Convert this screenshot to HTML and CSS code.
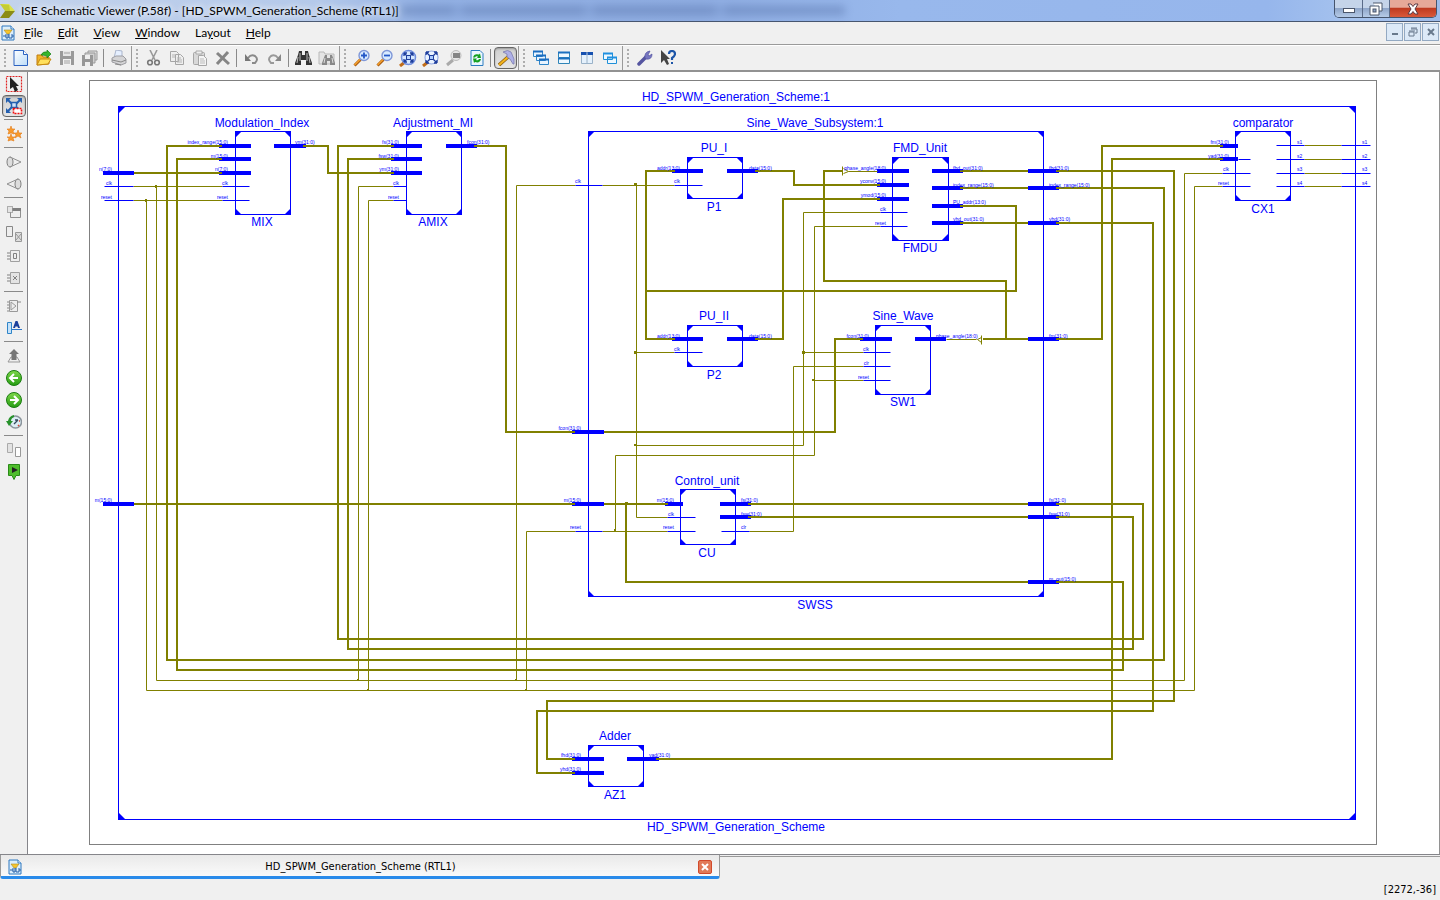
FILE: index.html
```html
<!DOCTYPE html>
<html lang="en">
<head>
<meta charset="utf-8">
<title>ISE Schematic Viewer</title>
<link rel="stylesheet" href="styles.css">
</head>
<body>
<svg class="defs" aria-hidden="true">
  <defs>
    <linearGradient id="g-green" x1="0" y1="0" x2="0" y2="1"><stop offset="0" stop-color="#7fd84a"/><stop offset="1" stop-color="#249c12"/></linearGradient>
    <linearGradient id="g-page" x1="0" y1="0" x2="1" y2="1"><stop offset="0" stop-color="#fff"/><stop offset="1" stop-color="#bcdcf8"/></linearGradient>
    <symbol id="doc" viewBox="0 0 16 16"><path d="M2 1h9l3 3v11H2z" fill="#dceefb" stroke="#2f78c0"/><path d="M11 1v3h3" fill="#fff" stroke="#2f78c0"/><path d="M4 5h8l-3 4H7z" fill="#f7c52d" stroke="#a98a2a" stroke-width=".6"/><path d="M3 11h3M6 9v4h2v-4M9 9v4h3v-4M12 11h2" fill="none" stroke="#245ea8"/></symbol>
    <symbol id="lens" viewBox="0 0 18 18"><path d="M1.500 16.500l6-6" stroke="#a85b10" stroke-width="3"/><path d="M1.500 16l6-6" stroke="#f5a12c" stroke-width="1.500"/><circle cx="11" cy="6.500" r="5" fill="#d9ebff" stroke="#7f97d8" stroke-width="1.400"/></symbol>
  </defs>
</svg>
<div class="app">
  <header class="titlebar">
    <svg class="logo" width="16" height="16" viewBox="0 0 16 16" aria-hidden="true"><path d="M0 1h9l6 7h-5z" fill="#dce34c"/><path d="M0 1l9 1 1 6H5z" fill="#c4cc35"/><path d="M5 8h10l-6 7H0z" fill="#8b8c16"/></svg>
    <h1 class="title">ISE Schematic Viewer (P.58f) - [HD_SPWM_Generation_Scheme (RTL1)]</h1>
    <span class="haze" aria-hidden="true"></span>
    <div class="wincontrols">
      <button class="wc wc-min" aria-label="Minimize"><svg width="14" height="12" viewBox="0 0 14 12"><rect x="1.500" y="5.500" width="11" height="4" fill="#fff" stroke="#4b566b"/></svg></button>
      <button class="wc wc-max" aria-label="Restore"><svg width="14" height="14" viewBox="0 0 14 14"><path d="M4 1h9v8h-3M1 4h9v9H1z" fill="#fff" stroke="#4b566b"/><rect x="4" y="7" width="3" height="3" fill="#8fa5c6" stroke="#4b566b"/></svg></button>
      <button class="wc wc-close" aria-label="Close"><svg width="14" height="12" viewBox="0 0 14 12"><path d="M2 1h3l2 2.500L9 1h3L9 6l3 5H9L7 8.500 5 11H2l3-5z" fill="#fff" stroke="#5a3a44"/></svg></button>
    </div>
  </header>

  <nav class="menubar">
    <svg class="docicon" width="16" height="16"><use href="#doc"/></svg>
    <button class="menu"><u>F</u>ile</button>
    <button class="menu"><u>E</u>dit</button>
    <button class="menu"><u>V</u>iew</button>
    <button class="menu"><u>W</u>indow</button>
    <button class="menu">La<u>y</u>out</button>
    <button class="menu"><u>H</u>elp</button>
    <div class="mdi">
      <button class="mdib" aria-label="Minimize document"><svg width="10" height="10"><rect x="2" y="6" width="6" height="2" fill="#68798c"/></svg></button>
      <button class="mdib" aria-label="Restore document"><svg width="10" height="10"><path d="M3 2h6v4H7M1 5h5v4H1zM3 1h6M1 4h6" fill="none" stroke="#68798c"/></svg></button>
      <button class="mdib" aria-label="Close document"><svg width="10" height="10"><path d="M2 2l6 6M8 2l-6 6" stroke="#68798c" stroke-width="2"/></svg></button>
    </div>
  </nav>

  <div class="toolbar">
    <div class="group">
      <button class="tb" aria-label="New"><svg width="16" height="16"><path d="M1 .500h9.500L14.500 4.500V15.500H1z" fill="url(#g-page)" stroke="#2c62c0"/><path d="M10.500 .500v4h4" fill="#fff" stroke="#2c62c0"/></svg></button>
      <button class="tb" aria-label="Open"><svg width="16" height="16"><path d="M1 5h5l1 2h6v7L1 15z" fill="#f0b428" stroke="#c07c10"/><path d="M1 15l3-6h11l-3 5z" fill="#ffe05c" stroke="#c58a12"/><path d="M5 5q2-4 6-3V0l4 4-4 4V6q-3-1-6-1z" fill="#37b52c" stroke="#188018" stroke-width=".7"/></svg></button>
      <button class="tb" aria-label="Save"><svg width="16" height="16"><path d="M1 1h14v14H1z" fill="#9a9a9a"/><path d="M4 1h8v5H4z" fill="#e6e6e6"/><path d="M4 9h8v6H4z" fill="#f2f2f2"/><path d="M5 3h6M5 11h6M5 13h6" stroke="#a0a0a0"/></svg></button>
      <button class="tb" aria-label="Save all"><svg width="16" height="16"><path d="M6 1h9v9H6z" fill="#ddd" stroke="#999"/><path d="M3 3h10v10H3z" fill="#d0d0d0" stroke="#999"/><path d="M0 5h11v11H0z" fill="#979797"/><path d="M3 5h5v4H3zM3 12h5v4H3z" fill="#eee"/></svg></button>
      <span class="sep"></span>
      <button class="tb" aria-label="Print"><svg width="16" height="16"><path d="M5 0l6 1v7H3z" fill="#e5efff" stroke="#aab5cc"/><path d="M1 8l4-2h7l3 3v4l-5 2-9-3z" fill="#d4d4d6" stroke="#9d9da2"/><path d="M1 10l9 2 5-2M4 14l6 1" fill="none" stroke="#888"/></svg></button>
    </div>
    <div class="group">
      <button class="tb" aria-label="Cut"><svg width="16" height="16"><path d="M4 0l5 10M11 0L6 10" stroke="#999" stroke-width="1.600"/><circle cx="4" cy="12.500" r="2.300" fill="none" stroke="#777" stroke-width="1.600"/><circle cx="11" cy="12.500" r="2.300" fill="none" stroke="#777" stroke-width="1.600"/></svg></button>
      <button class="tb" aria-label="Copy"><svg width="16" height="16"><path d="M1.500 1.500h6l2 2v8h-8zM6.500 4.500h5l3 3v7h-8z" fill="#eee" stroke="#a6a6a6"/><path d="M3 5h3M3 7h3M8 8h4M8 10h5M8 12h5" stroke="#b5b5b5"/></svg></button>
      <button class="tb" aria-label="Paste"><svg width="16" height="16"><rect x="1.500" y="2.500" width="11" height="12" rx="1" fill="#d8d8d8" stroke="#a6a6a6"/><path d="M4 1h6v3H4z" fill="#eee" stroke="#aaa"/><path d="M6.500 5.500h5l3 3v7h-8z" fill="#f4f4f4" stroke="#a6a6a6"/><path d="M8 9h4M8 11h5M8 13h5" stroke="#bbb"/></svg></button>
      <button class="tb" aria-label="Delete"><svg width="16" height="16"><path d="M2 3l12 11M13 2L2 14" stroke="#858585" stroke-width="3"/></svg></button>
      <span class="sep"></span>
      <button class="tb" aria-label="Undo"><svg width="16" height="16"><path d="M4 8q3-4 7-2 4 3 0 7H8" fill="none" stroke="#8a8a8a" stroke-width="2"/><path d="M1 4v7h6z" fill="#777"/></svg></button>
      <button class="tb" aria-label="Redo"><svg width="16" height="16"><path d="M11 8q-3-4-7-2-4 3 0 7h3" fill="none" stroke="#999" stroke-width="2"/><path d="M14 4v7H8z" fill="#888"/></svg></button>
      <span class="sep"></span>
      <button class="tb" aria-label="Find"><svg width="18" height="16"><path d="M4 1h3v4h3V1h3l1 4 3 8v2h-6v-5H6v5H0v-2l3-8z" fill="#333"/><path d="M3 7l-1 6M14 7l1 6M5 3v8M12 3v8" stroke="#bbb" stroke-width="1"/></svg></button>
      <button class="tb" aria-label="Find in files"><svg width="18" height="16"><path d="M1 2h5l1 2h9v10H1z" fill="#e4e4e4" stroke="#b8b8b8"/><path d="M7 5h2v3h3V5h2l3 8v2h-5v-4H9v4H4v-2z" fill="#888"/><path d="M7 8l-1 5M14 8l1 5" stroke="#ddd"/></svg></button>
    </div>
    <div class="group">
      <button class="tb" aria-label="Zoom in"><svg width="18" height="18"><use href="#lens"/><path d="M8 6.500h6M11 3.500v6" stroke="#2458c8" stroke-width="1.800"/></svg></button>
      <button class="tb" aria-label="Zoom out"><svg width="18" height="18"><use href="#lens"/><path d="M8 6.500h6" stroke="#2458c8" stroke-width="1.800"/></svg></button>
      <button class="tb" aria-label="Zoom to full view"><svg width="18" height="18"><path d="M1 17l5-4" stroke="#c06c18" stroke-width="3"/><circle cx="9.500" cy="8.500" r="7" fill="#d8e9ff" stroke="#6f8ddc" stroke-width="1.500"/><path d="M5 4l3 3M14 4l-3 3M5 13l3-3M14 13l-3-3M5 4h3M5 4v3M14 4h-3M14 4v3M5 13h3M5 13v-3M14 13h-3M14 13v-3" stroke="#1c3c9c" stroke-width="1.300"/><path d="M7.500 6.500h4v4h-4z" fill="#b9d5ff" stroke="#1c3c9c"/></svg></button>
      <button class="tb" aria-label="Zoom to selected"><svg width="18" height="18"><path d="M1 17l5-4" stroke="#c06c18" stroke-width="3"/><circle cx="9.500" cy="8.500" r="6.500" fill="#eaf3ff" stroke="#93aae4" stroke-width="1.200"/><path d="M4 3l4 4M15 3l-4 4M4 14l4-4M15 14l-4-4M4 3h3M4 3v3M15 3h-3M15 3v3M4 14h3M4 14v-3M15 14h-3M15 14v-3" stroke="#1c3c9c" stroke-width="1.300"/><path d="M7.500 6.500h4v4h-4z" fill="#a9caff" stroke="#1c3c9c"/></svg></button>
      <button class="tb" aria-label="Zoom to box"><svg width="18" height="18"><path d="M2 16l6-5" stroke="#aaa" stroke-width="3"/><circle cx="11" cy="6.500" r="5" fill="#e6e6e6" stroke="#bbb"/><path d="M8 4h7v5H8z" fill="#858585"/></svg></button>
      <button class="tb" aria-label="Refresh"><svg width="16" height="16"><path d="M2 .500h9l3 3v12H2z" fill="#eaf6ff" stroke="#2c7cc0"/><path d="M4 7.500q1-4.500 6-3l1-1 1 4.500H8l1-1.500q-2-1-3 1zM12 9q-1 4.500-6 3l-1 1-1-4.500h4L7 10q2 1 3-1z" fill="#15a020"/></svg></button>
      <span class="sep"></span>
      <button class="tb pressed" aria-label="Options" aria-pressed="true"><svg width="18" height="18"><path d="M2 16l9-8" stroke="#8a5b0c" stroke-width="3.600"/><path d="M2 16l9-8" stroke="#f3b41d" stroke-width="2.200"/><path d="M6 3q5-3 8 0l3 7v5h-1l-3-5-3-2 0-3z" fill="#aeb0e8" stroke="#7c7cae" stroke-width=".8"/></svg></button>
    </div>
    <div class="group">
      <button class="tb" aria-label="Cascade"><svg width="16" height="16"><path d="M.500 1.500h9v5h-9zM3.500 5.500h9v5h-9zM6.500 9.500h9v5h-9z" fill="#e8f4ff" stroke="#2f85c8"/><path d="M0 1.500h10M3 5.500h10M6 9.500h10" stroke="#1b6cc0" stroke-width="2"/></svg></button>
      <button class="tb" aria-label="Tile horizontally"><svg width="14" height="14"><path d="M1.500 1.500h11v5h-11zM1.500 7.500h11v5h-11z" fill="#eef8ff" stroke="#2f85b8"/><path d="M1 1.500h12M1 7.500h12" stroke="#1b70c0" stroke-width="2"/></svg></button>
      <button class="tb" aria-label="Tile vertically"><svg width="14" height="14"><path d="M1.500 1.500h11v11h-11zM7 2v11" fill="#e5f1fc" stroke="#9ab2c8"/><path d="M1 2.500h5.500M7.500 2.500H13" stroke="#1550b0" stroke-width="3"/></svg></button>
      <button class="tb" aria-label="Float"><svg width="16" height="14"><path d="M1.500 2.500h9v6h-9zM5.500 6.500h9v6h-9z" fill="#eef8ff" stroke="#2090d8"/><path d="M1 2.500h10M5 6.500h10" stroke="#2090e0" stroke-width="2"/></svg></button>
    </div>
    <div class="group last">
      <button class="tb" aria-label="Preferences"><svg width="16" height="16"><path d="M2 14L9 7" stroke="#5555a0" stroke-width="3.500" stroke-linecap="round"/><path d="M8 8q-1-6 5-7l-2 4 1 1 3-2q0 6-6 5z" fill="#7676c0" stroke="#5050a0" stroke-width=".7"/></svg></button>
      <button class="tb" aria-label="What's this?"><svg width="16" height="16"><path d="M1 0v13l3-3 3 5 2-1-2-5h3z" fill="#444"/><path d="M9 4q0-3 3-3t3 3q0 2-3 4v2" fill="none" stroke="#1c55a8" stroke-width="2.200"/><path d="M11 12h2v2h-2z" fill="#1c55a8"/></svg></button>
    </div>
  </div>

  <main class="work">
    <aside class="sidebar">
      <button class="sb" aria-label="Select"><svg width="18" height="18"><path d="M1.500 1.500h15v15h-15z" fill="none" stroke="#e02020" stroke-width="1.200" stroke-dasharray="2 1"/><path d="M5 2v12l3-2 2 5 3-2-2-4h3z" fill="#222"/></svg></button>
      <button class="sb pressed" aria-label="Zoom box" aria-pressed="true"><svg width="18" height="18"><path d="M2 2l5 5M16 2l-5 5M2 15l5-5M14 12l-3-2" stroke="#2460b0" stroke-width="2"/><path d="M1 1h5L1 6zM17 1h-5l5 5zM1 16h5l-5-5z" fill="#2460b0"/><path d="M6.500 5.500h5v5h-5z" fill="#cfe3fa" stroke="#2460b0" stroke-width="1.500"/><path d="M8.500 11.500h8v5h-8z" fill="#fff" stroke="#f01010" stroke-width="1.600" stroke-dasharray="2 1"/></svg></button>
      <span class="hsep"></span>
      <button class="sb" aria-label="Wizard"><svg width="18" height="18"><path d="M6 1l1 3h3L8 6l1 3-3-1-3 1 1-3-2-2h3zM13 5l1 3h3l-2 2 1 3-3-2-3 2 1-3-2-2h3zM6 9l1 3h3l-2 1 1 3-3-1-3 1 1-3-2-1h3z" fill="#f79a2b" stroke="#e27a18" stroke-width=".6"/></svg></button>
      <span class="hsep"></span>
      <button class="sb" aria-label="Add forward cone"><svg width="16" height="14"><path d="M4 2l11 5-11 5" fill="#eee" stroke="#909090"/><ellipse cx="4" cy="7" rx="3" ry="5" fill="#ddd" stroke="#808080"/></svg></button>
      <button class="sb" aria-label="Add backward cone"><svg width="16" height="14"><path d="M12 2L1 7l11 5" fill="#eee" stroke="#909090"/><ellipse cx="12" cy="7" rx="3" ry="5" fill="#ddd" stroke="#808080"/></svg></button>
      <span class="hsep"></span>
      <button class="sb" aria-label="Group"><svg width="16" height="14"><path d="M4.500 4.500h10v8h-10z" fill="#eee" stroke="#909090"/><path d="M4 4.500h11" stroke="#808080" stroke-width="3"/><path d="M1.500 1.500h5v6h-5z" fill="#e4e4e4" stroke="#707070" stroke-dasharray="1 1"/></svg></button>
      <button class="sb" aria-label="Ungroup"><svg width="16" height="16"><path d="M.500 .500h6v10h-6z" fill="#eee" stroke="#888"/><path d="M9.500 6.500h6v9h-6zM10 8l5 6M15 8l-5 6" fill="#ddd" stroke="#999"/></svg></button>
      <button class="sb" aria-label="Show pins"><svg width="14" height="14"><path d="M3.500 1.500h9v11h-9z" fill="#eee" stroke="#a0a0a0"/><path d="M6.500 4.500h3v5h-3zM0 4h3M0 7h3M0 10h3" fill="none" stroke="#808080"/></svg></button>
      <button class="sb" aria-label="Hide pins"><svg width="14" height="14"><path d="M3.500 1.500h9v11h-9z" fill="#e4e4e4" stroke="#a0a0a0"/><path d="M6 5l4 4M10 5L6 9M0 4h3M0 7h3M0 10h3" fill="none" stroke="#808080"/></svg></button>
      <span class="hsep"></span>
      <button class="sb" aria-label="Show logic"><svg width="16" height="14"><path d="M3.500 1.500h8v11h-8zM5 3l5 4-5 4z" fill="#eee" stroke="#999"/><path d="M1 3h2M1 6h2M1 9h2M1 12h2M11 3h4" stroke="#888"/></svg></button>
      <button class="sb" aria-label="Rename"><svg width="16" height="14"><path d="M1.500 1.500h4v11h-4z" fill="#c5e2fa" stroke="#2f85c8"/><path d="M6 8.500h10" stroke="#2f75c8"/><path d="M7 7l2.500-7h2L14 7h-2l-.500-1.500h-2L9 7z" fill="#1c409c"/></svg></button>
      <span class="hsep"></span>
      <button class="sb" aria-label="Pop up"><svg width="14" height="14"><path d="M1 13l3-5h6l3 5z" fill="#eee" stroke="#999"/><path d="M7 0l5 5H9.500v6h-5V5H2z" fill="#777"/></svg></button>
      <button class="sb" aria-label="Back"><svg width="18" height="18"><circle cx="9" cy="9" r="7.500" fill="url(#g-green)" stroke="#1b7d12"/><path d="M13 9H5.500M9 5L5 9l4 4" fill="none" stroke="#fff" stroke-width="2"/></svg></button>
      <button class="sb" aria-label="Forward"><svg width="18" height="18"><circle cx="9" cy="9" r="7.500" fill="url(#g-green)" stroke="#1b7d12"/><path d="M5 9h7.500M9 5l4 4-4 4" fill="none" stroke="#fff" stroke-width="2"/></svg></button>
      <button class="sb" aria-label="History"><svg width="16" height="16"><circle cx="9.500" cy="8" r="6" fill="#dcecf4" stroke="#8b949c" stroke-width="1.500"/><path d="M8 10l4-4M9 6h3" stroke="#34495c" stroke-width="1.300"/><path d="M12 11l1 1M13 7h1" stroke="#e04030" stroke-width="1.500"/><path d="M0 7h7L3 12zM2 7q1-5 6-6v2q-3 1-3 4z" fill="#27922b"/></svg></button>
      <span class="hsep"></span>
      <button class="sb" aria-label="Compare"><svg width="16" height="16"><path d="M1.500 1.500h5v9h-5z" fill="#e2e2e2" stroke="#aaa"/><path d="M9.500 5.500h5v9h-5z" fill="#fff" stroke="#999"/></svg></button>
      <button class="sb" aria-label="Run"><svg width="14" height="16"><path d="M1.500 .500h11v11H9l-2 4-2-4H1.500z" fill="#4fbd2c" stroke="#2a8a18"/><path d="M5 3l6 3-6 3z" fill="#222"/></svg></button>
    </aside>

    <div class="canvas">
      <svg class="schematic" viewBox="28 72 1411 782" role="img" aria-label="RTL schematic of HD_SPWM_Generation_Scheme">
        <rect class="sheet" x="89.500" y="80.500" width="1287" height="764"/>

        <g class="box" transform="translate(.5 .5)">
          <rect x="118" y="106" width="1237" height="713"/>
          <rect x="588" y="131" width="455" height="465"/>
          <rect x="235" y="131" width="55" height="83"/>
          <rect x="406" y="131" width="55" height="83"/>
          <rect x="687" y="157" width="55" height="41"/>
          <rect x="687" y="325" width="55" height="41"/>
          <rect x="892" y="157" width="56" height="83"/>
          <rect x="875" y="325" width="55" height="69"/>
          <rect x="1235" y="131" width="55" height="69"/>
          <rect x="680" y="489" width="55" height="55"/>
          <rect x="588" y="745" width="55" height="41"/>
        </g>
        <path class="corner" d="
          M118 106h8l-8 8zM1356 106h-8l8 8zM118 820h8l-8-8zM1356 820h-8l8-8z
          M588 131h7l-7 7zM1044 131h-7l7 7zM588 597h7l-7-7zM1044 597h-7l7-7z
          M235 131h7l-7 7zM291 131h-7l7 7zM235 215h7l-7-7zM291 215h-7l7-7z
          M406 131h7l-7 7zM462 131h-7l7 7zM406 215h7l-7-7zM462 215h-7l7-7z
          M687 157h7l-7 7zM743 157h-7l7 7zM687 199h7l-7-7zM743 199h-7l7-7z
          M687 325h7l-7 7zM743 325h-7l7 7zM687 367h7l-7-7zM743 367h-7l7-7z
          M892 157h8l-8 8zM949 157h-8l8 8zM892 241h8l-8-8zM949 241h-8l8-8z
          M875 325h7l-7 7zM931 325h-7l7 7zM875 395h7l-7-7zM931 395h-7l7-7z
          M1235 131h7l-7 7zM1291 131h-7l7 7zM1235 201h7l-7-7zM1291 201h-7l7-7z
          M680 489h7l-7 7zM736 489h-7l7 7zM680 545h7l-7-7zM736 545h-7l7-7z
          M588 745h7l-7 7zM644 745h-7l7 7zM588 787h7l-7-7zM644 787h-7l7-7z"/>

        <path class="pin" d="M103 173h31M103 504h31
          M219 146h32M219 159h32M219 173h32M274 146h32
          M391 146h31M391 159h31M391 173h31M446 146h31
          M672 171h31M727 171h31M672 339h31M727 339h31
          M877 171h32M877 185h32M877 199h32M932 171h31M932 188h31M932 206h31M932 223h31
          M1028 171h31M1028 188h31M1028 223h31M1028 339h31M1028 504h31M1028 517h31M1028 582h31
          M860 339h32M915 339h31M1220 146h18M1220 159h18
          M572 432h32M572 504h32M665 504h18M720 504h31M720 517h31
          M572 759h32M572 773h32M627 759h32"/>

        <path class="bus" d="M134 173H222M134 504H575
          M222 146H167V660H1164V188H1056M222 159H177V670H1123V582H1056
          M303 146H328V173H394
          M394 146H338V639H1143V504H1056M394 159H348V649H1133V517H1056
          M474 146H506V432H575M604 432H835V339H863
          M675 171H646V339H675M755 171H794V185H880M755 339H783V199H880
          M646 291H1016V206H960M842 171H824V281H1006V339
          M960 171H1028M960 188H1028M960 223H1028M983 339H1028
          M1056 171H1174V701H547V759H575M1056 223H1153V711H537V773H575
          M1056 339H1102V146H1223M656 759H1112V159H1223
          M604 504H668M626 504V582H1028M748 504H1028M748 517H1028"/>

        <path class="wire" transform="translate(.5 .5)" d="M133 186H222M156 186V680H1184V173H1222
          M133 200H222M146 200V690H1194V186H1222
          M393 186H358V680M393 200H368V690
          M575 185H516V680M602 185H674M636 185V517H667M636 352H674
          M880 212H803V445H636M880 226H814V455H615V531M803 352H863M814 380H863
          M863 366H793V531H749M575 531H526V690M602 531H667
          M1304 145H1341M1304 159H1341M1304 173H1341M1304 186H1341
          M848 171H877M946 339H976M842 166V175M843 168L848 171L843 173M981 335V344M981 337L977 339L981 342"/>
        <path class="dot" d="M155 185h2v3h-2zM145 199h2v3h-2zM357 679h2v2h-2zM367 689h2v2h-2zM515 679h2v2h-2zM525 689h2v2h-2zM634 183h3v3h-3zM634 351h3v3h-3zM634 444h3v2h-3zM802 351h3v3h-3zM812 379h3v2h-3zM614 529h2v3h-2zM625 502h3v2h-3z"/>

        <path class="pinline" transform="translate(.5 .5)" d="M104 186h29M104 200h29M222 186h27M222 200h27M393 186h13M393 200h13
          M575 185h27M575 531h27M674 185h28M674 352h28M880 212h27M880 226h27
          M863 352h27M863 366h27M863 380h27M667 517h28M667 531h28M721 531h28
          M1238 159h12M1222 173h28M1222 186h28
          M1276 145h28M1276 159h28M1276 173h28M1276 186h28M1341 145h29M1341 159h29M1341 173h29M1341 186h29"/>

        <g class="name">
          <text x="736" y="101">HD_SPWM_Generation_Scheme:1</text>
          <text x="736" y="831">HD_SPWM_Generation_Scheme</text>
          <text x="262" y="127">Modulation_Index</text><text x="262" y="226">MIX</text>
          <text x="433" y="127">Adjustment_MI</text><text x="433" y="226">AMIX</text>
          <text x="815" y="127">Sine_Wave_Subsystem:1</text><text x="815" y="609">SWSS</text>
          <text x="714" y="152">PU_I</text><text x="714" y="211">P1</text>
          <text x="714" y="320">PU_II</text><text x="714" y="379">P2</text>
          <text x="920" y="152">FMD_Unit</text><text x="920" y="252">FMDU</text>
          <text x="903" y="320">Sine_Wave</text><text x="903" y="406">SW1</text>
          <text x="1263" y="127">comparator</text><text x="1263" y="213">CX1</text>
          <text x="707" y="485">Control_unit</text><text x="707" y="557">CU</text>
          <text x="615" y="740">Adder</text><text x="615" y="799">AZ1</text>
        </g>
        <g class="port in">
          <text x="112" y="171">n(7:0)</text><text x="112" y="185">clk</text><text x="112" y="199">reset</text><text x="112" y="502">m(15:0)</text>
          <text x="228" y="144">index_range(15:0)</text><text x="228" y="158">m(15:0)</text><text x="228" y="171">n(7:0)</text><text x="228" y="185">clk</text><text x="228" y="199">reset</text>
          <text x="399" y="144">fs(31:0)</text><text x="399" y="158">fsw(31:0)</text><text x="399" y="171">ym(31:0)</text><text x="399" y="185">clk</text><text x="399" y="199">reset</text>
          <text x="581" y="183">clk</text><text x="581" y="430">fcon(31:0)</text><text x="581" y="502">m(15:0)</text><text x="581" y="529">reset</text>
          <text x="680" y="170">addr(13:0)</text><text x="680" y="183">clk</text><text x="680" y="338">addr(13:0)</text><text x="680" y="351">clk</text>
          <text x="886" y="170">phase_angle(18:0)</text><text x="886" y="183">yconv(15:0)</text><text x="886" y="197">ymod(15:0)</text><text x="886" y="211">clk</text><text x="886" y="225">reset</text>
          <text x="869" y="338">fcon(31:0)</text><text x="869" y="351">clk</text><text x="869" y="365">clr</text><text x="869" y="379">reset</text>
          <text x="1229" y="144">fm(31:0)</text><text x="1229" y="158">yad(31:0)</text><text x="1229" y="171">clk</text><text x="1229" y="185">reset</text>
          <text x="674" y="502">m(15:0)</text><text x="674" y="516">clk</text><text x="674" y="529">reset</text>
          <text x="581" y="757">fhd(31:0)</text><text x="581" y="771">yhd(31:0)</text>
        </g>
        <g class="port out">
          <text x="295" y="144">ym(31:0)</text><text x="467" y="144">fcon(31:0)</text>
          <text x="749" y="170">data(15:0)</text><text x="749" y="338">data(15:0)</text>
          <text x="953" y="170">fhd_out(31:0)</text><text x="953" y="187">index_range(15:0)</text><text x="953" y="204">PU_addr(13:0)</text><text x="953" y="221">yhd_out(31:0)</text>
          <text x="936" y="338">phase_angle(18:0)</text>
          <text x="1049" y="170">fhd(31:0)</text><text x="1049" y="187">index_range(15:0)</text><text x="1049" y="221">yhd(31:0)</text><text x="1049" y="338">fm(31:0)</text><text x="1049" y="502">fs(31:0)</text><text x="1049" y="516">fsw(31:0)</text><text x="1049" y="581">m_out(15:0)</text>
          <text x="741" y="502">fs(31:0)</text><text x="741" y="516">fsw(31:0)</text><text x="741" y="529">clr</text>
          <text x="649" y="757">yad(31:0)</text>
          <text x="1297" y="144">s1</text><text x="1297" y="158">s2</text><text x="1297" y="171">s3</text><text x="1297" y="185">s4</text>
          <text x="1362" y="144">s1</text><text x="1362" y="158">s2</text><text x="1362" y="171">s3</text><text x="1362" y="185">s4</text>
        </g>
      </svg>
    </div>
  </main>

  <div class="tabs">
    <div class="tab">
      <svg class="tabicon" width="16" height="16"><use href="#doc"/></svg>
      <button class="tabname">HD_SPWM_Generation_Scheme (RTL1)</button>
      <button class="tabclose" aria-label="Close tab"><svg width="8" height="8"><path d="M1 1l6 6M7 1L1 7" stroke="#fff" stroke-width="2"/></svg></button>
    </div>
    <div class="tabfill"></div>
  </div>
  <footer class="status"><span>[2272,-36]</span></footer>
</div>
</body>
</html>
```
FILE: styles.css
```css
* { box-sizing: border-box; }
html, body { height: 100%; margin: 0; }
body { background: #f0f0f0; color: #000; font: 12px Lato, "Open Sans", sans-serif; overflow: hidden; }
button { margin: 0; padding: 0; border: 0; background: none; font: inherit; color: inherit; }
svg { display: block; flex: none; }
.defs { position: absolute; width: 0; height: 0; }
.app { display: flex; flex-direction: column; height: 100vh; }

.titlebar { display: flex; align-items: center; height: 22px; border-bottom: 1px solid #47566f; background: linear-gradient(90deg, #c3d3ec 0, #b4c9ea 320px, #93b1e4 420px, #8fade2 700px, #98b8ec 900px, #96b6ec 88%, #a6c3ee 94%, #9dbbe8 100%); }
.logo { margin-right: 5px; }
.title { margin: 0; font-size: 12px; font-weight: 400; line-height: 20px; white-space: nowrap; text-shadow: 0 0 6px #fff, 0 0 8px #fff; }
.haze { width: 444px; height: 9px; margin-left: 2px; background: repeating-linear-gradient(90deg, #4c68a0 0 50px, #7493cb 56px 59px, #4c68a0 64px 131px); opacity: .4; filter: blur(4px); }
.wincontrols { display: flex; align-self: flex-start; height: 18px; margin: 0 3px 0 auto; border: 1px solid #45546c; border-top: 0; border-radius: 0 0 5px 5px; overflow: hidden; }
.wc { display: flex; align-items: center; justify-content: center; width: 27px; height: 17px; border-right: 1px solid #5a6b88; background: linear-gradient(#c5d4e9 0 45%, #8fa6c9 50%, #b6cbe7); }
.wc-min { width: 28px; }
.wc-close { width: 46px; border-right: 0; background: linear-gradient(#e6a898 0 42%, #bf3a20 50%, #d9593a); }

.menubar { display: flex; align-items: center; height: 23px; border-bottom: 1px solid #9a9a9a; }
.docicon { margin-right: 3px; }
.menu { height: 22px; padding: 0 5px; margin-right: 5px; line-height: 22px; }
.mdi { display: flex; gap: 1px; margin: 0 1px 3px auto; }
.mdib { display: flex; align-items: center; justify-content: center; width: 17px; height: 18px; border: 1px solid #93a9c2; background: #dce9f7; }

.toolbar { display: flex; height: 27px; border-top: 1px solid #fff; border-bottom: 2px solid #929292; }
.group { position: relative; display: flex; align-items: center; padding: 0 1px 0 10px; border-right: 1px solid #9a9a9a; }
.group:first-child { padding-left: 9px; }
.group::before { content: ""; position: absolute; left: 4px; top: 3px; bottom: 2px; width: 2px; background: repeating-linear-gradient(#adadad 0 2px, transparent 2px 4px); }
.last { border-right: 0; }
.tb { display: flex; align-items: center; justify-content: center; width: 23px; height: 22px; }
.sep { width: 1px; height: 18px; margin: 0 3px 0 2px; background: #8a8a8a; }
.pressed { border: 1px solid #666; border-radius: 4px; background: linear-gradient(#cfcfcf, #e6e6e6); box-shadow: inset 0 1px 2px #999; }

.work { display: flex; flex: 1; min-height: 0; }
.sidebar { display: flex; flex-direction: column; align-items: center; width: 28px; padding-top: 1px; border-right: 1px solid #85858a; }
.sb { display: flex; flex: none; align-items: center; justify-content: center; width: 24px; height: 22px; }
.hsep { flex: none; width: 19px; height: 1px; margin: 2px 0 3px; background: #8a8a8a; }
.canvas { flex: 1; min-width: 0; border-right: 1px solid #929292; background: #fff; }
.schematic { width: 100%; height: 100%; }

.sheet { fill: none; stroke: #808080; }
.box, .pinline { fill: none; stroke: #00f; }
.corner { fill: #00f; }
.pin { fill: none; stroke: #00f; stroke-width: 4; }
.bus { fill: none; stroke: #808000; stroke-width: 2; }
.wire { fill: none; stroke: #808000; }
.dot { fill: #808000; }
.name { fill: #00f; font: 12px "Liberation Sans", Arial, sans-serif; text-anchor: middle; }
.port { fill: #00f; font: 5px "Liberation Sans", Arial, sans-serif; }
.in { text-anchor: end; }
.out { text-anchor: start; }

.tabs { display: flex; height: 25px; border-top: 1px solid #85858a; font: 11px "DejaVu Sans Condensed", "Noto Sans", sans-serif; }
.tab { display: flex; align-items: center; width: 50%; padding: 2px 7px 0 6px; border: solid #9a9a9a; border-width: 0 1px 0 1px; border-bottom: 3px solid #2a8bea; border-radius: 0 0 3px 3px; background: linear-gradient(#e9e9e9, #fafafa); }
.tabname { flex: 1; text-align: center; }
.tabclose { display: flex; align-items: center; justify-content: center; width: 14px; height: 14px; border: 1px solid #d24a2c; border-radius: 2px; background: #e27a58; }
.tabfill { flex: 1; margin-top: 1px; border-top: 1px solid #9a9a9a; }
.status { display: flex; align-items: center; justify-content: flex-end; height: 21px; padding-right: 4px; font: 11px "DejaVu Sans Condensed", "Noto Sans", sans-serif; }
```
